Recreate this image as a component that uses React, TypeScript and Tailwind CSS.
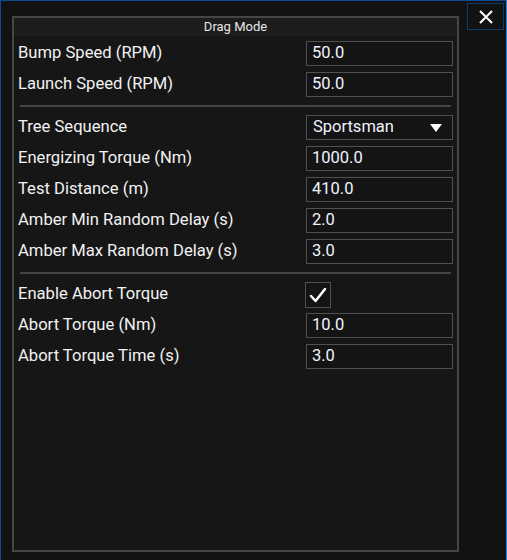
import React from 'react';

const font = { fontFamily: 'Roboto, "Noto Sans", sans-serif' };

const Field: React.FC<{ value: string }> = ({ value }) => (
  <div className="w-[147px] h-[25px] border border-[#505050] bg-[#141414] px-[5px] flex items-center text-[16.5px] text-[#eef3ff]">
    {value}
  </div>
);

const Row: React.FC<{ label: string; children: React.ReactNode }> = ({ label, children }) => (
  <div className="flex items-center justify-between h-[25px]">
    <span className="text-[16.6px] text-[#f2f2f2]">{label}</span>
    {children}
  </div>
);

const Sep = () => (
  <div className="h-[6px] flex items-center px-[2px]">
    <div className="h-[1.5px] w-full bg-[#444]" />
  </div>
);

const App: React.FC = () => {
  return (
    <div
      style={font}
      className="relative w-[507px] h-[560px] bg-[#121212] border-l border-t border-[#0b4a94] border-r border-r-[#1e88e5] overflow-hidden"
    >
      {/* Close button */}
      <button className="absolute top-[2px] right-[2px] w-[37px] h-[27px] border border-[#0d3b70] flex items-center justify-center">
        <svg width="14" height="14" viewBox="0 0 14 14" fill="none" stroke="white" strokeWidth="2">
          <path d="M1 1L13 13M13 1L1 13" />
        </svg>
      </button>

      {/* Panel */}
      <div className="mt-[15px] ml-[11px] w-[447px] h-[536px] border-2 border-[#454545] bg-[#161616] flex flex-col">
        <div className="h-[18px] bg-[#1d1d1d] flex items-center justify-center text-[13px] text-[#e6e6e6]">
          Drag Mode
        </div>
        <div className="px-[4px] pt-[5px] flex flex-col gap-[6px]">
          <Row label="Bump Speed (RPM)"><Field value="50.0" /></Row>
          <Row label="Launch Speed (RPM)"><Field value="50.0" /></Row>
          <Sep />
          <Row label="Tree Sequence">
            <div className="w-[147px] h-[25px] border border-[#505050] bg-[#141414] pl-[6px] pr-[10px] flex items-center justify-between text-[16.5px] text-[#eef3ff]">
              Sportsman
              <svg width="12" height="8" viewBox="0 0 12 8">
                <path d="M0 0H12L6 8Z" fill="white" />
              </svg>
            </div>
          </Row>
          <Row label="Energizing Torque (Nm)"><Field value="1000.0" /></Row>
          <Row label="Test Distance (m)"><Field value="410.0" /></Row>
          <Row label="Amber Min Random Delay (s)"><Field value="2.0" /></Row>
          <Row label="Amber Max Random Delay (s)"><Field value="3.0" /></Row>
          <Sep />
          <Row label="Enable Abort Torque">
            <div className="w-[147px] h-[25px] flex items-center">
              <div className="w-[26px] h-[26px] shrink-0 border border-[#505050] bg-[#141414] flex items-center justify-center -ml-[1px]">
                <svg width="18" height="16" viewBox="0 0 18 16" fill="none" stroke="white" strokeWidth="2.5" strokeLinecap="round" strokeLinejoin="round">
                  <path d="M2 9L6.5 14L16 2" />
                </svg>
              </div>
            </div>
          </Row>
          <Row label="Abort Torque (Nm)"><Field value="10.0" /></Row>
          <Row label="Abort Torque Time (s)"><Field value="3.0" /></Row>
        </div>
      </div>
    </div>
  );
};

export default App;
